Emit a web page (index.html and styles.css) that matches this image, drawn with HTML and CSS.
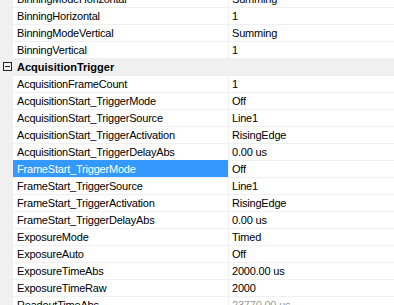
FILE: index.html
```html
<!DOCTYPE html>
<html>
<head>
<meta charset="utf-8">
<link rel="stylesheet" href="styles.css">
</head>
<body>
<div class="grid">
  <div class="row"><div class="gutter"></div><div class="name">BinningModeHorizontal</div><div class="sep"></div><div class="value">Summing</div></div>
  <div class="row"><div class="gutter"></div><div class="name">BinningHorizontal</div><div class="sep"></div><div class="value">1</div></div>
  <div class="row"><div class="gutter"></div><div class="name">BinningModeVertical</div><div class="sep"></div><div class="value">Summing</div></div>
  <div class="row"><div class="gutter"></div><div class="name">BinningVertical</div><div class="sep"></div><div class="value">1</div></div>
  <div class="category">
    <div class="toggle"><svg width="9" height="9" viewBox="0 0 9 9"><rect x="0.5" y="0.5" width="8" height="8" fill="none" stroke="#222" stroke-width="1"/><line x1="2" y1="4.5" x2="7" y2="4.5" stroke="#222" stroke-width="1"/></svg></div>
    <div class="cat-name">AcquisitionTrigger</div>
  </div>
  <div class="row"><div class="gutter"></div><div class="name">AcquisitionFrameCount</div><div class="sep"></div><div class="value">1</div></div>
  <div class="row"><div class="gutter"></div><div class="name">AcquisitionStart_TriggerMode</div><div class="sep"></div><div class="value">Off</div></div>
  <div class="row"><div class="gutter"></div><div class="name">AcquisitionStart_TriggerSource</div><div class="sep"></div><div class="value">Line1</div></div>
  <div class="row"><div class="gutter"></div><div class="name">AcquisitionStart_TriggerActivation</div><div class="sep"></div><div class="value">RisingEdge</div></div>
  <div class="row"><div class="gutter"></div><div class="name">AcquisitionStart_TriggerDelayAbs</div><div class="sep"></div><div class="value">0.00 us</div></div>
  <div class="row selected"><div class="gutter"></div><div class="name">FrameStart_TriggerMode</div><div class="sep"></div><div class="value">Off</div></div>
  <div class="row"><div class="gutter"></div><div class="name">FrameStart_TriggerSource</div><div class="sep"></div><div class="value">Line1</div></div>
  <div class="row"><div class="gutter"></div><div class="name">FrameStart_TriggerActivation</div><div class="sep"></div><div class="value">RisingEdge</div></div>
  <div class="row"><div class="gutter"></div><div class="name">FrameStart_TriggerDelayAbs</div><div class="sep"></div><div class="value">0.00 us</div></div>
  <div class="row"><div class="gutter"></div><div class="name">ExposureMode</div><div class="sep"></div><div class="value">Timed</div></div>
  <div class="row"><div class="gutter"></div><div class="name">ExposureAuto</div><div class="sep"></div><div class="value">Off</div></div>
  <div class="row"><div class="gutter"></div><div class="name">ExposureTimeAbs</div><div class="sep"></div><div class="value">2000.00 us</div></div>
  <div class="row"><div class="gutter"></div><div class="name">ExposureTimeRaw</div><div class="sep"></div><div class="value">2000</div></div>
  <div class="row"><div class="gutter"></div><div class="name">ReadoutTimeAbs</div><div class="sep"></div><div class="value readonly">23770.00 us</div></div>
</div>
</body>
</html>
```

FILE: styles.css
```css
html, body {
  margin: 0;
  padding: 0;
  background: #ffffff;
  overflow: hidden;
}
body {
  font-family: "Liberation Sans", Arial, sans-serif;
  font-size: 11px;
  line-height: 16px;
  letter-spacing: -0.2px;
  color: #000000;
}
.grid {
  margin-top: -10px;
  display: flex;
  flex-direction: column;
}
.row {
  display: grid;
  grid-template-columns: 13px 215px 1px 1fr;
  height: 17px;
}
.gutter {
  background: #f0f0f0;
}
.sep {
  background: #f0f0f0;
}
.name,
.value {
  border-top: 1px solid #f0f0f0;
  white-space: nowrap;
  overflow: hidden;
}
.name {
  padding-left: 4px;
}
.value {
  padding-left: 3px;
}
.value.readonly {
  color: #9a9a9a;
}
.row.selected .name {
  background: #3399ff;
  border-top-color: #3399ff;
  color: #ffffff;
}
.category {
  display: flex;
  height: 17px;
  background: #f0f0f0;
}
.toggle {
  width: 13px;
  padding-left: 3px;
  padding-top: 4px;
  box-sizing: border-box;
  line-height: 0;
}
.cat-name {
  padding-left: 4px;
  padding-top: 1px;
  font-weight: bold;
  letter-spacing: 0;
}
```
